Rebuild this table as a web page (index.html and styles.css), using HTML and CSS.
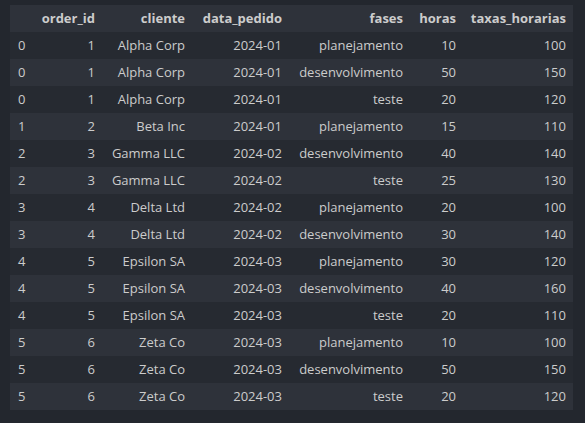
FILE: index.html
```html
<!DOCTYPE html>
<html>
<head>
<meta charset="utf-8">
<link rel="stylesheet" href="styles.css">
</head>
<body>
<div class="output">
<table class="dataframe">
<colgroup>
<col class="c-idx"><col class="c-order"><col class="c-cliente"><col class="c-data"><col class="c-fases"><col class="c-horas"><col class="c-taxas">
</colgroup>
<thead>
<tr><th></th><th>order_id</th><th>cliente</th><th>data_pedido</th><th>fases</th><th>horas</th><th>taxas_horarias</th></tr>
</thead>
<tbody>
<tr><th>0</th><td>1</td><td>Alpha Corp</td><td>2024-01</td><td>planejamento</td><td>10</td><td>100</td></tr>
<tr><th>0</th><td>1</td><td>Alpha Corp</td><td>2024-01</td><td>desenvolvimento</td><td>50</td><td>150</td></tr>
<tr><th>0</th><td>1</td><td>Alpha Corp</td><td>2024-01</td><td>teste</td><td>20</td><td>120</td></tr>
<tr><th>1</th><td>2</td><td>Beta Inc</td><td>2024-01</td><td>planejamento</td><td>15</td><td>110</td></tr>
<tr><th>2</th><td>3</td><td>Gamma LLC</td><td>2024-02</td><td>desenvolvimento</td><td>40</td><td>140</td></tr>
<tr><th>2</th><td>3</td><td>Gamma LLC</td><td>2024-02</td><td>teste</td><td>25</td><td>130</td></tr>
<tr><th>3</th><td>4</td><td>Delta Ltd</td><td>2024-02</td><td>planejamento</td><td>20</td><td>100</td></tr>
<tr><th>3</th><td>4</td><td>Delta Ltd</td><td>2024-02</td><td>desenvolvimento</td><td>30</td><td>140</td></tr>
<tr><th>4</th><td>5</td><td>Epsilon SA</td><td>2024-03</td><td>planejamento</td><td>30</td><td>120</td></tr>
<tr><th>4</th><td>5</td><td>Epsilon SA</td><td>2024-03</td><td>desenvolvimento</td><td>40</td><td>160</td></tr>
<tr><th>4</th><td>5</td><td>Epsilon SA</td><td>2024-03</td><td>teste</td><td>20</td><td>110</td></tr>
<tr><th>5</th><td>6</td><td>Zeta Co</td><td>2024-03</td><td>planejamento</td><td>10</td><td>100</td></tr>
<tr><th>5</th><td>6</td><td>Zeta Co</td><td>2024-03</td><td>desenvolvimento</td><td>50</td><td>150</td></tr>
<tr><th>5</th><td>6</td><td>Zeta Co</td><td>2024-03</td><td>teste</td><td>20</td><td>120</td></tr>
</tbody>
</table>
</div>
</body>
</html>
```
FILE: styles.css
```css
html, body {
  margin: 0;
  padding: 0;
  background: #23272e;
}
.output {
  padding: 5px 0 0 10px;
}
.dataframe {
  border-collapse: collapse;
  table-layout: fixed;
  width: 563px;
  font-family: "Open Sans", "Noto Sans", sans-serif;
  font-size: 13px;
  color: #cccccc;
}
.c-idx { width: 26px; }
.c-order { width: 66px; }
.c-cliente { width: 90px; }
.c-data { width: 97px; }
.c-fases { width: 121px; }
.c-horas { width: 53px; }
.c-taxas { width: 110px; }
.dataframe tr {
  height: 27px;
}
.dataframe th,
.dataframe td {
  padding: 0 7px 0 0;
  text-align: right;
  white-space: nowrap;
  vertical-align: middle;
  line-height: 27px;
}
.dataframe thead tr {
  background: #2e323a;
}
.dataframe thead th {
  font-weight: 700;
}
.dataframe tbody th {
  font-weight: 400;
  text-align: left;
  padding-left: 8px;
}
.dataframe tbody tr:nth-child(odd) {
  background: #262a31;
}
.dataframe tbody tr:nth-child(even) {
  background: #2e323a;
}
```
